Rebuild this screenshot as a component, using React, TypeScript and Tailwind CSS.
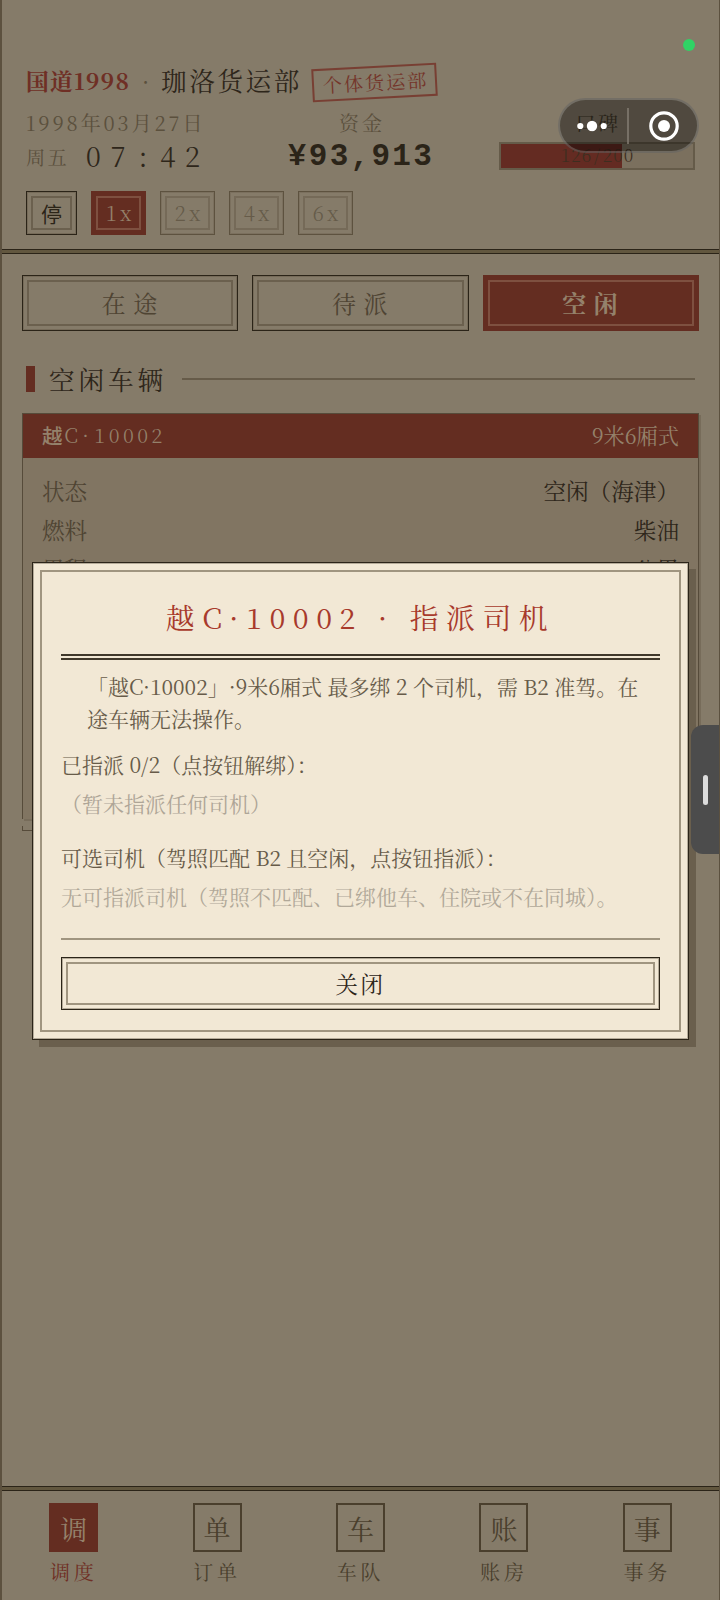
import clsx from 'clsx';

const speeds = ['1x', '2x', '4x', '6x'];

const tabs = [
  { key: 'transit', name: '在途' },
  { key: 'pending', name: '待派' },
  { key: 'idle', name: '空闲' },
];

const navItems = [
  { icon: '调', name: '调度' },
  { icon: '单', name: '订单' },
  { icon: '车', name: '车队' },
  { icon: '账', name: '账房' },
  { icon: '事', name: '事务' },
];

// Typewriter-like text: every character sits in a cell of the same width
function Cells({ text, cell }: { text: string; cell: string }) {
  return (
    <span className="inline-flex font-light">
      {text.split('').map((c, i) => (
        <span key={i} className={clsx('text-center', cell)}>{c}</span>
      ))}
    </span>
  );
}

function Header() {
  return (
    <header className="h-[249px] shrink-0 px-6 pt-[62px]">
      <div className="flex h-9 items-center whitespace-nowrap">
        <span className="w-[116px] pt-0.5 text-[22.8px] font-bold tracking-[1.2px] text-[#6f2f25]">国道1998</span>
        <span className="w-[19px] text-[22px] text-[#5b503d]">·</span>
        <span className="w-[151px] text-[25.6px] tracking-[2.6px] text-[#2e261a]">珈洛货运部</span>
        <span className="mt-1 flex h-[33px] w-[125px] -rotate-3 items-center justify-center border-2 border-[#783f33] pl-0.5 text-[19.2px] tracking-[1.9px] text-[#74352a]">
          个体货运部
        </span>
      </div>

      <div className="grid grid-cols-[240px_190px_1fr] whitespace-nowrap">
        <div>
          <div className="h-12 text-[20px] leading-[50px] tracking-[2.9px] text-[#5b503d]">1998年03月27日</div>
          <div className="-mt-[7px] flex h-8 items-center">
            <span className="w-[55px] pt-1 text-[19.2px] tracking-[2.4px] text-[#5b503d]">周五</span>
            <span className="text-[28px] leading-8 text-[#2e261a]">
              <Cells text="07:42" cell="w-[24.8px]" />
            </span>
          </div>
        </div>
        <div className="text-center">
          <div className="h-12 pl-0.5 text-[20px] leading-[50px] tracking-[2.9px] text-[#5b503d]">资金</div>
          <div className="-mt-[7px] h-8 font-['Liberation_Mono',monospace] text-[31px] font-bold leading-[35px] tracking-[2.3px] text-[#2b2418]">
            ¥93,913
          </div>
        </div>
        <div className="flex flex-col items-end">
          <div className="h-11 w-[196px] pl-0.5 text-center text-[20px] leading-[50px] tracking-[2.4px] text-[#453b2c]">口碑</div>
          <div className="relative h-7 w-[196px] border-2 border-[#655b49] bg-[#7b705e]">
            <div className="h-full w-[63%] bg-[#642b22]" />
            <span className="absolute inset-0 text-center text-[17.5px] leading-[22px] text-[#3d2e20]">
              <Cells text="126/200" cell="w-[10.5px]" />
            </span>
          </div>
        </div>
      </div>

      <div className="mt-5 flex gap-[14px]">
        <button className="h-11 w-[51px] border border-[#2b2418] p-1 shadow-[inset_0_0_0_1px_#766b59]">
          <span className="flex h-full items-center justify-center border-2 border-[#6b604e] pt-px font-['Noto_Sans_CJK_SC',sans-serif] text-[21px] font-normal text-[#2b2418]">
            停
          </span>
        </button>
        {speeds.map((s, i) => (
          <button
            key={s}
            className={clsx(
              'h-11 w-[55px] border p-1',
              i === 0
                ? 'border-[#642d21] bg-[#642d21] text-[#94816b]'
                : 'border-[#5d523f] text-[#665b49] shadow-[inset_0_0_0_1px_#7b705e]'
            )}
          >
            <span
              className={clsx(
                'flex h-full items-center justify-center border-2 pb-0.5 text-[20.5px]',
                i === 0 ? 'border-[#7e5040]' : 'border-[#756a58]'
              )}
            >
              <Cells text={s} cell="w-[14.4px]" />
            </span>
          </button>
        ))}
      </div>
    </header>
  );
}

// Pair of hairlines that separates header, page and bottom bar
function DoubleRule() {
  return <div className="h-[5px] shrink-0 border-y border-[#2b2418] bg-[#62573f]" />;
}

function VehicleCard() {
  const rows = [
    { label: '状态', value: '空闲（海津）' },
    { label: '燃料', value: '柴油' },
  ];

  return (
    <div>
      <div className="h-[406px] border border-b-0 border-[#564b3a] bg-[#817562] shadow-[2px_2px_0_#776c5a]">
        <div className="flex h-11 items-center justify-between bg-[#642d21] px-[19px] pb-0.5 text-[#94816b]">
          <span className="flex items-center text-[20px]">
            <span className="w-[22px] text-[20.5px] font-['Noto_Sans_CJK_SC',sans-serif] font-medium">越</span>
            <Cells text="C·10002" cell="w-[14.3px]" />
          </span>
          <span className="pt-0.5 text-[21.2px]">9米6厢式</span>
        </div>
        <div className="px-[19px] pt-[13px] text-[22.6px] text-[#2e261a]">
          {rows.map(row => (
            <div key={row.label} className="flex h-[39px] items-center justify-between">
              <span className="text-[#4f4433]">{row.label}</span>
              <span>{row.value}</span>
            </div>
          ))}
          <div className="flex h-[39px] items-center justify-between">
            <span className="text-[#4f4433]">里程</span>
            <span className="flex gap-1.5">
              <Cells text="38,710" cell="w-[11.8px]" />
              公里
            </span>
          </div>
        </div>
      </div>
      <div className="mt-[7px] h-[5px] border border-t-0 border-[#564b3a]" />
    </div>
  );
}

function AssignDialog() {
  return (
    <div className="absolute left-8 top-[562px] h-[478px] w-[657px] border border-[#2b2418] bg-[#f2e8d5] p-[7px] shadow-[inset_0_0_0_1px_#b5ab99,7px_7px_0_#6a5f4d]">
      <div className="flex h-full flex-col border-2 border-[#a09580] px-[19px] text-[21px] text-[#675b49]">
        <h2 className="h-[88px] shrink-0 whitespace-nowrap border-b-[6px] border-double border-[#40382b] pt-[21px] text-center text-[28.8px] leading-[48px] tracking-[7.55px] text-[#a83a2c]">
          越C·10002 · 指派司机
        </h2>
        <p className="mt-[10px] whitespace-nowrap pl-[26px] leading-8 [text-spacing-trim:space-all]">
          「越C·10002」·9米6厢式 最多绑 2 个司机，需 B2 准驾。在
          <br />
          途车辆无法操作。
        </p>
        <p className="mt-[14px] leading-8">已指派 0/2（点按钮解绑）：</p>
        <p className="mt-[7px] leading-8 text-[#aea597]">（暂未指派任何司机）</p>
        <p className="mt-[22px] leading-8">可选司机（驾照匹配 B2 且空闲，点按钮指派）：</p>
        <p className="mt-[7px] whitespace-nowrap leading-8 text-[#b1a899]">无可指派司机（驾照不匹配、已绑他车、住院或不在同城）。</p>
        <div className="mt-[26px] border-t-2 border-[#a09580] pt-[17px]">
          <button className="block h-[53px] w-full border border-[#2b2418] p-1 shadow-[inset_0_0_0_1px_#b5ab99]">
            <span className="flex h-full items-center justify-center border-2 border-[#a09580] text-[22.4px] tracking-[2.6px] text-[#2b2418]">
              关闭
            </span>
          </button>
        </div>
      </div>
    </div>
  );
}

function BottomNav() {
  return (
    <nav className="grid h-[109px] shrink-0 grid-cols-5 pt-3">
      {navItems.map((item, i) => (
        <div key={item.name} className={clsx('flex flex-col items-center', i === 0 ? 'text-[#6f2f25]' : 'text-[#4a3f2d]')}>
          <div
            className={clsx(
              'flex size-[49px] items-center justify-center border-2 pt-[3px] text-[27px]',
              i === 0 ? 'border-[#642d21] bg-[#642d21] text-[#94816b]' : 'border-[#4a3f2d]'
            )}
          >
            {item.icon}
          </div>
          <span className="mt-[5px] text-[20px] leading-[30px] tracking-[3.8px]">{item.name}</span>
        </div>
      ))}
    </nav>
  );
}

function Capsule() {
  return (
    <div className="absolute left-[558px] top-[98px] h-[55px] w-[141px] rounded-full border-2 border-white/20 bg-black/40">
      <svg className="h-full w-full" viewBox="0 0 137 51" fill="#fff">
        <circle cx="20.3" cy="26" r="3.1" />
        <circle cx="32" cy="26" r="5.2" />
        <circle cx="43.7" cy="26" r="3.1" />
        <path d="M68 8v36" stroke="#857e74" strokeWidth="1.5" />
        <circle cx="104" cy="26" r="13.2" fill="none" stroke="#fff" strokeWidth="3.2" />
        <circle cx="104" cy="26" r="6" />
      </svg>
    </div>
  );
}

export default function App() {
  return (
    <div className="relative flex h-[1600px] w-[720px] flex-col overflow-hidden border-l-2 border-r border-[#5c513f] bg-[#857b69] font-['Noto_Serif_CJK_SC','Liberation_Serif','Noto_Sans_CJK_SC',serif] font-normal">
      <Header />
      <DoubleRule />

      <main className="px-5 pt-[21px]">
        <div className="grid grid-cols-3 gap-[14px]">
          {tabs.map(tab => {
            const active = tab.key === 'idle';
            return (
              <button
                key={tab.key}
                className={clsx(
                  'h-14 border p-1',
                  active ? 'border-[#642d21] bg-[#642d21]' : 'border-[#2b2418] shadow-[inset_0_0_0_1px_#766b59]'
                )}
              >
                <span
                  className={clsx(
                    'flex h-full items-center justify-center border-2 pl-1.5 text-[24px] tracking-[7.6px]',
                    active ? 'border-[#7e5040] font-bold text-[#94816b]' : 'border-[#6b604e] text-[#4f4433]'
                  )}
                >
                  {tab.name}
                </span>
              </button>
            );
          })}
        </div>

        <div className="mt-[29px] flex h-[38px] items-center pl-1 pr-1">
          <span className="h-[26px] w-[9px] bg-[#642d21]" />
          <h3 className="ml-[14px] w-[133px] whitespace-nowrap text-[25.6px] tracking-[3.9px] text-[#2e261a]">空闲车辆</h3>
          <span className="h-0.5 flex-1 bg-[#665b49]" />
        </div>

        <div className="mt-[15px]">
          <VehicleCard />
        </div>
      </main>

      <div className="flex-1" />
      <DoubleRule />
      <BottomNav />

      <div className="absolute inset-y-0 -left-0.5 w-0">
        <AssignDialog />
        <Capsule />
        <div className="absolute left-[683px] top-[39px] size-3 rounded-full bg-[#2fd365]" />
        <div className="absolute left-[691px] top-[725px] flex h-[129px] w-[29px] items-center rounded-l-xl bg-[#4c4c4c] pl-3">
          <span className="h-[30px] w-[5px] rounded-full bg-[#dcdcdc]" />
        </div>
      </div>
    </div>
  );
}
